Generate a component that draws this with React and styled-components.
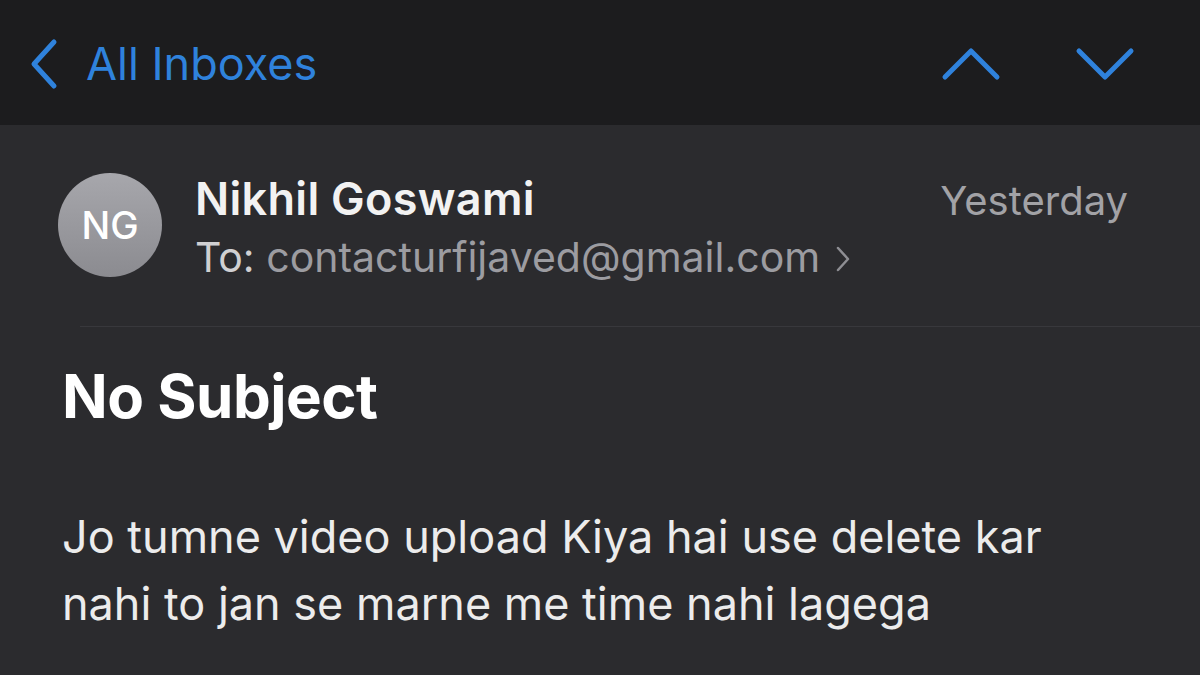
import styled, { createGlobalStyle } from 'styled-components';

const GlobalStyle = createGlobalStyle`
  html, body {
    margin: 0;
    padding: 0;
    background: #2b2b2e;
  }
  body {
    font-family: Inter, "Noto Sans", "Liberation Sans", sans-serif;
    -webkit-font-smoothing: antialiased;
  }
`;

const BLUE = '#2f82dc';

function Chevron({ dir, width, height }) {
  const paths = {
    left: 'M26 4 L6 26 L26 48',
    up: 'M4 32 L30 6 L56 32',
    down: 'M4 6 L30 32 L56 6',
  };
  const box = dir === 'left' ? '0 0 32 52' : '0 0 60 38';
  return (
    <svg width={width} height={height} viewBox={box} fill='none'>
      <path d={paths[dir]} stroke={BLUE} strokeWidth='5' strokeLinecap='round' strokeLinejoin='round' />
    </svg>
  );
}

function App() {
  return (
    <>
      <GlobalStyle />
      <Page>
        <TopBar>
          <BackLink>
            <Chevron dir='left' width={32} height={52} />
            <BackText>All Inboxes</BackText>
          </BackLink>
          <NavArrows>
            <Chevron dir='up' width={60} height={38} />
            <Chevron dir='down' width={60} height={38} />
          </NavArrows>
        </TopBar>
        <Content>
          <Header>
            <Avatar>NG</Avatar>
            <SenderInfo>
              <SenderRow>
                <SenderName>Nikhil Goswami</SenderName>
                <DateText>Yesterday</DateText>
              </SenderRow>
              <ToLine>
                To: <Email>contacturfijaved@gmail.com</Email>
                <svg width='18' height='28' viewBox='0 0 18 28' fill='none'>
                  <path d='M4 3 L14 14 L4 25' stroke='#8e8e93' strokeWidth='2.5' strokeLinecap='round' strokeLinejoin='round' />
                </svg>
              </ToLine>
            </SenderInfo>
          </Header>
          <Divider />
          <Subject>No Subject</Subject>
          <Body>
            Jo tumne video upload Kiya hai use delete kar
            <br />
            nahi to jan se marne me time nahi lagega
          </Body>
        </Content>
      </Page>
    </>
  );
}

export default App;

const Page = styled.div`
  width: 1200px;
  height: 675px;
  overflow: hidden;
  background: #2b2b2e;
`;

const TopBar = styled.div`
  height: 125px;
  background: #1c1c1e;
  display: flex;
  align-items: center;
  justify-content: space-between;
  padding: 0 65px 0 28px;
  box-sizing: border-box;
`;

const BackLink = styled.div`
  display: flex;
  align-items: center;
  gap: 26px;
  margin-top: 2px;
`;

const BackText = styled.span`
  color: ${BLUE};
  font-size: 45px;
  font-weight: 400;
`;

const NavArrows = styled.div`
  display: flex;
  align-items: center;
  gap: 74px;
  margin-top: 2px;
`;

const Content = styled.div`
  padding: 48px 0 0;
`;

const Header = styled.div`
  display: flex;
  align-items: flex-start;
  padding: 0 72px 0 58px;
`;

const Avatar = styled.div`
  width: 104px;
  height: 104px;
  border-radius: 50%;
  background: linear-gradient(180deg, #a7a7ac 0%, #8b8b90 100%);
  color: #ffffff;
  font-size: 38px;
  font-weight: 500;
  display: flex;
  align-items: center;
  justify-content: center;
  flex-shrink: 0;
`;

const SenderInfo = styled.div`
  flex: 1;
  margin-left: 33px;
  display: flex;
  flex-direction: column;
`;

const SenderRow = styled.div`
  display: flex;
  justify-content: space-between;
  align-items: baseline;
  margin-top: -2px;
`;

const SenderName = styled.span`
  color: #f2f2f2;
  font-size: 45px;
  font-weight: 600;
  letter-spacing: 0.3px;
`;

const DateText = styled.span`
  color: #a2a2a6;
  font-size: 40px;
  font-weight: 400;
`;

const ToLine = styled.div`
  display: flex;
  align-items: center;
  color: #d0d0d2;
  font-size: 41px;
  margin-top: 6px;
  white-space: pre;

  svg {
    margin-left: 14px;
    margin-top: 4px;
  }
`;

const Email = styled.span`
  color: #9c9ca1;
`;

const Divider = styled.div`
  height: 1px;
  background: #38383c;
  margin: 44px 0 0 80px;
`;

const Subject = styled.h1`
  margin: 33px 0 0 62px;
  color: #ffffff;
  font-size: 60px;
  font-weight: 700;
  letter-spacing: -0.5px;
`;

const Body = styled.p`
  margin: 71px 0 0 62px;
  color: #ececec;
  font-size: 45px;
  line-height: 67px;
  font-weight: 400;
`;
